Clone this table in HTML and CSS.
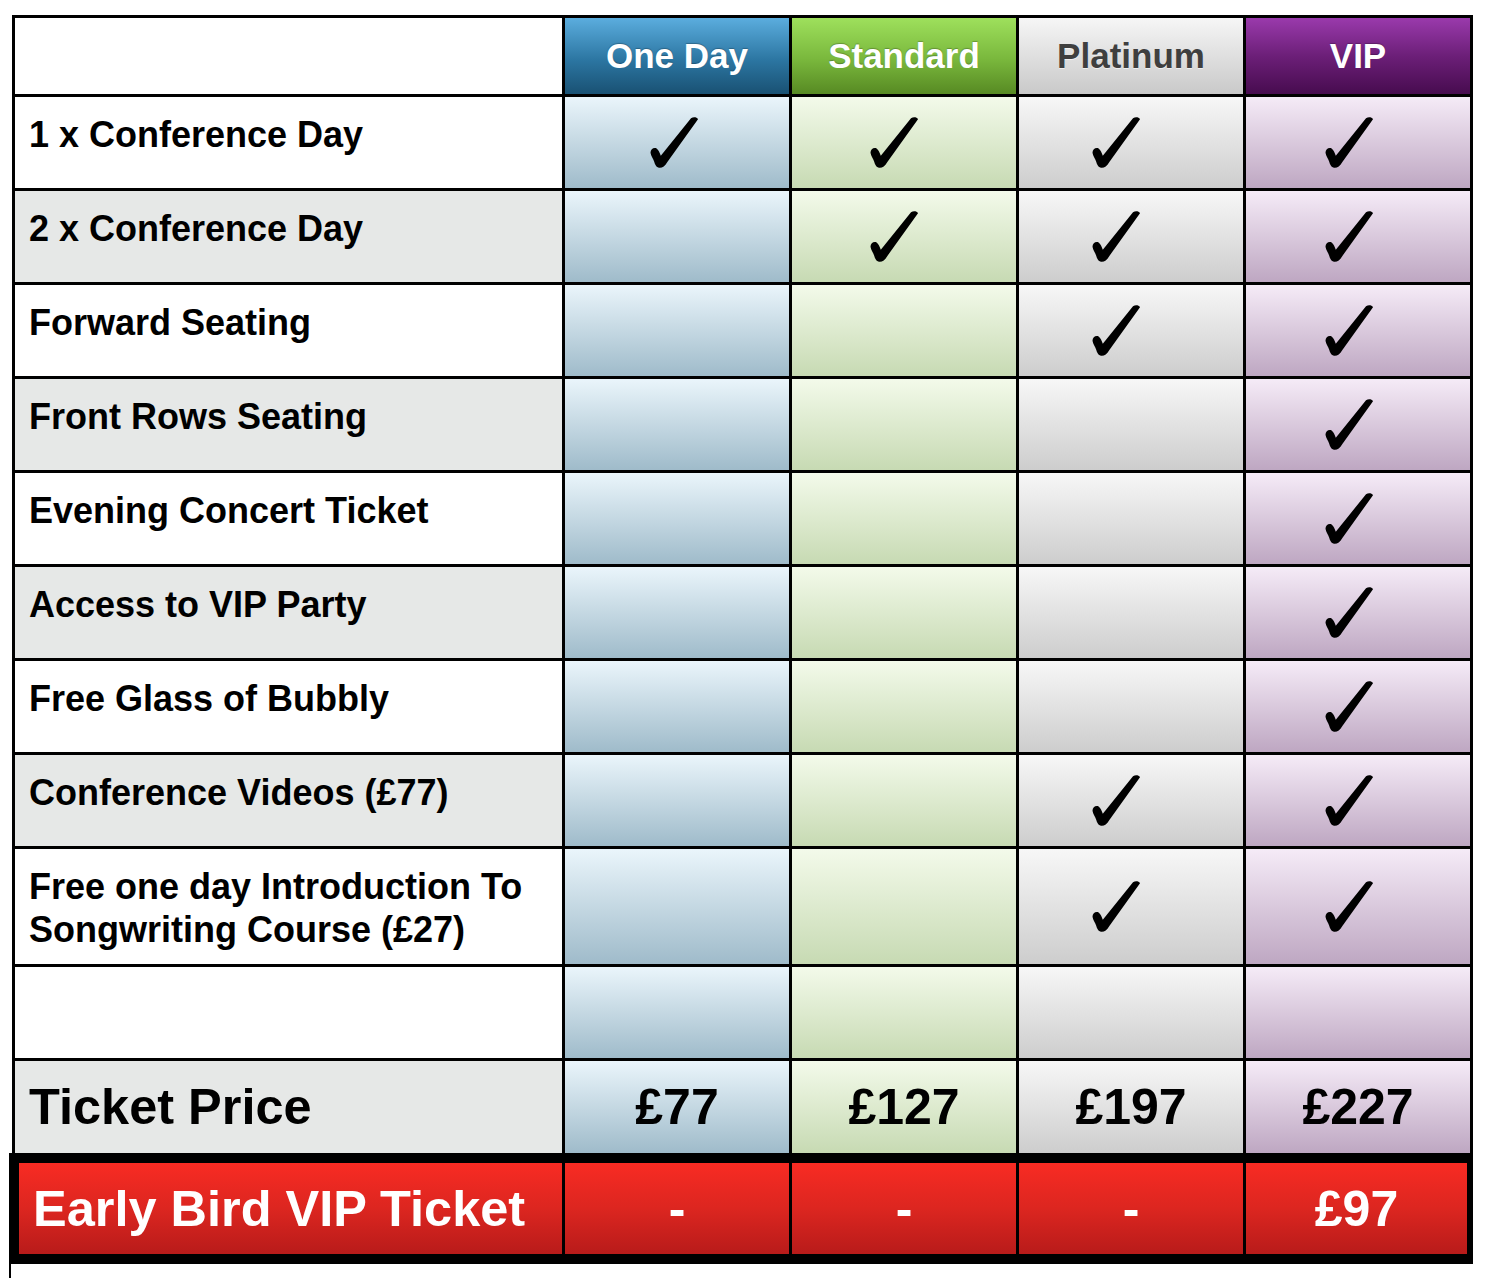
FILE: index.html
```html
<!DOCTYPE html>
<html lang="en">
<head>
<meta charset="utf-8">
<title>Ticket Prices</title>
<link rel="stylesheet" href="styles.css">
</head>
<body>
<svg class="defs" width="0" height="0" aria-hidden="true">
  <symbol id="chk" viewBox="0 0 48 51">
    <path d="M41 1.2C43.2-0.3 46.8-0.2 48 2.2L17.2 45.2C14.6 49.8 11.4 51.6 8.2 50.6C6 49.8 5 47.4 4.2 44.8C3.2 41.6 1.2 39.4 0.6 36.2C0 32.2 3.8 29.8 6.6 31.4C8.8 32.8 9.8 36.2 10.8 38.8Z"/>
  </symbol>
</svg>
<div class="pricing">
  <div class="grid">
    <div class="label white"></div>
    <div class="head oneday">One Day</div>
    <div class="head standard">Standard</div>
    <div class="head platinum">Platinum</div>
    <div class="head vip">VIP</div>

    <div class="label white">1 x Conference Day</div>
    <div class="cell oneday"><svg class="chk"><use href="#chk"/></svg></div>
    <div class="cell standard"><svg class="chk"><use href="#chk"/></svg></div>
    <div class="cell platinum"><svg class="chk"><use href="#chk"/></svg></div>
    <div class="cell vip"><svg class="chk"><use href="#chk"/></svg></div>

    <div class="label grey">2 x Conference Day</div>
    <div class="cell oneday"></div>
    <div class="cell standard"><svg class="chk"><use href="#chk"/></svg></div>
    <div class="cell platinum"><svg class="chk"><use href="#chk"/></svg></div>
    <div class="cell vip"><svg class="chk"><use href="#chk"/></svg></div>

    <div class="label white">Forward Seating</div>
    <div class="cell oneday"></div>
    <div class="cell standard"></div>
    <div class="cell platinum"><svg class="chk"><use href="#chk"/></svg></div>
    <div class="cell vip"><svg class="chk"><use href="#chk"/></svg></div>

    <div class="label grey">Front Rows Seating</div>
    <div class="cell oneday"></div>
    <div class="cell standard"></div>
    <div class="cell platinum"></div>
    <div class="cell vip"><svg class="chk"><use href="#chk"/></svg></div>

    <div class="label white">Evening Concert Ticket</div>
    <div class="cell oneday"></div>
    <div class="cell standard"></div>
    <div class="cell platinum"></div>
    <div class="cell vip"><svg class="chk"><use href="#chk"/></svg></div>

    <div class="label grey">Access to VIP Party</div>
    <div class="cell oneday"></div>
    <div class="cell standard"></div>
    <div class="cell platinum"></div>
    <div class="cell vip"><svg class="chk"><use href="#chk"/></svg></div>

    <div class="label white">Free Glass of Bubbly</div>
    <div class="cell oneday"></div>
    <div class="cell standard"></div>
    <div class="cell platinum"></div>
    <div class="cell vip"><svg class="chk"><use href="#chk"/></svg></div>

    <div class="label grey">Conference Videos (£77)</div>
    <div class="cell oneday"></div>
    <div class="cell standard"></div>
    <div class="cell platinum"><svg class="chk"><use href="#chk"/></svg></div>
    <div class="cell vip"><svg class="chk"><use href="#chk"/></svg></div>

    <div class="label white tall">Free one day Introduction To Songwriting Course (£27)</div>
    <div class="cell oneday"></div>
    <div class="cell standard"></div>
    <div class="cell platinum"><svg class="chk"><use href="#chk"/></svg></div>
    <div class="cell vip"><svg class="chk"><use href="#chk"/></svg></div>

    <div class="label white"></div>
    <div class="cell oneday"></div>
    <div class="cell standard"></div>
    <div class="cell platinum"></div>
    <div class="cell vip"></div>

    <div class="label grey price-label">Ticket Price</div>
    <div class="cell oneday price">£77</div>
    <div class="cell standard price">£127</div>
    <div class="cell platinum price">£197</div>
    <div class="cell vip price">£227</div>
  </div>

  <div class="early">
    <div class="early-label">Early Bird VIP Ticket</div>
    <div class="early-cell">-</div>
    <div class="early-cell">-</div>
    <div class="early-cell">-</div>
    <div class="early-cell">£97</div>
  </div>
  <div class="tail"></div>
</div>
</body>
</html>
```
FILE: styles.css
```css
html, body {
  margin: 0;
  padding: 0;
  background: #fff;
}

body {
  font-family: "Liberation Sans", Arial, Helvetica, sans-serif;
  font-weight: bold;
  color: #000;
}

.defs {
  position: absolute;
  width: 0;
  height: 0;
  overflow: hidden;
}

.pricing {
  padding-top: 15px;
}

.grid {
  display: grid;
  width: max-content;
  margin-left: 12px;
  grid-template-columns: 547px repeat(4, 224px);
  grid-template-rows: 76px repeat(8, 91px) 115px 91px 92px;
  gap: 3px;
  padding: 3px 3px 0 3px;
  background: #000;
}

.label {
  display: flex;
  align-items: flex-start;
  padding: 17px 14px 0 14px;
  font-size: 36px;
  line-height: 41px;
}

.label.white { background: #fff; }
.label.grey { background: #e6e8e7; }
.label.tall {
  padding-top: 16px;
  line-height: 43px;
}

.label.price-label {
  align-items: center;
  padding-top: 0;
  font-size: 50.5px;
  line-height: 58px;
}

.head {
  display: flex;
  align-items: center;
  justify-content: center;
  font-size: 35px;
  color: #fff;
  text-shadow: 0 -1px 1px rgba(0, 0, 0, 0.25);
}

.head.oneday { background: linear-gradient(#5badde, #2c76a2 55%, #195173); }
.head.standard { background: linear-gradient(#9ee05c, #79b73c 55%, #578a23); }
.head.platinum {
  background: linear-gradient(#f6f6f6, #c9c9c9);
  color: #3f3f3f;
  text-shadow: 0 1px 0 rgba(255, 255, 255, 0.6);
}
.head.vip { background: linear-gradient(#9a3aac, #6c1f78 50%, #470c4f); }

.cell {
  display: flex;
  align-items: center;
  justify-content: center;
}

.cell.oneday { background: linear-gradient(#eaf5fb, #9fbbca); }
.cell.standard { background: linear-gradient(#f3faea, #c7dab3); }
.cell.platinum { background: linear-gradient(#f7f7f7, #cdcdcd); }
.cell.vip { background: linear-gradient(#f5ebf7, #bea7c2); }

.chk {
  width: 48px;
  height: 51px;
  fill: #000;
}

.oneday .chk { margin-right: 7px; }
.standard .chk { margin-right: 20px; }
.platinum .chk { margin-right: 30px; }
.vip .chk { margin-right: 18px; }

.price {
  font-size: 50px;
  line-height: 58px;
}

.early {
  display: grid;
  width: max-content;
  margin-left: 9px;
  grid-template-columns: 543px repeat(3, 224px) 221px;
  grid-template-rows: 91px;
  gap: 3px;
  border-style: solid;
  border-color: #000;
  border-width: 10px 6px 10px 10px;
  background: #000;
}

.early-label,
.early-cell {
  display: flex;
  align-items: center;
  background: linear-gradient(#f82b23, #dc2620 50%, #b81b1a);
  color: #fff;
  font-size: 50px;
  line-height: 58px;
}

.early-label {
  padding-left: 14px;
  font-size: 50.5px;
}

.early-cell {
  justify-content: center;
}

.tail {
  margin-left: 9px;
  width: 0;
  height: 14px;
  border-left: 2px solid #000;
}
```
